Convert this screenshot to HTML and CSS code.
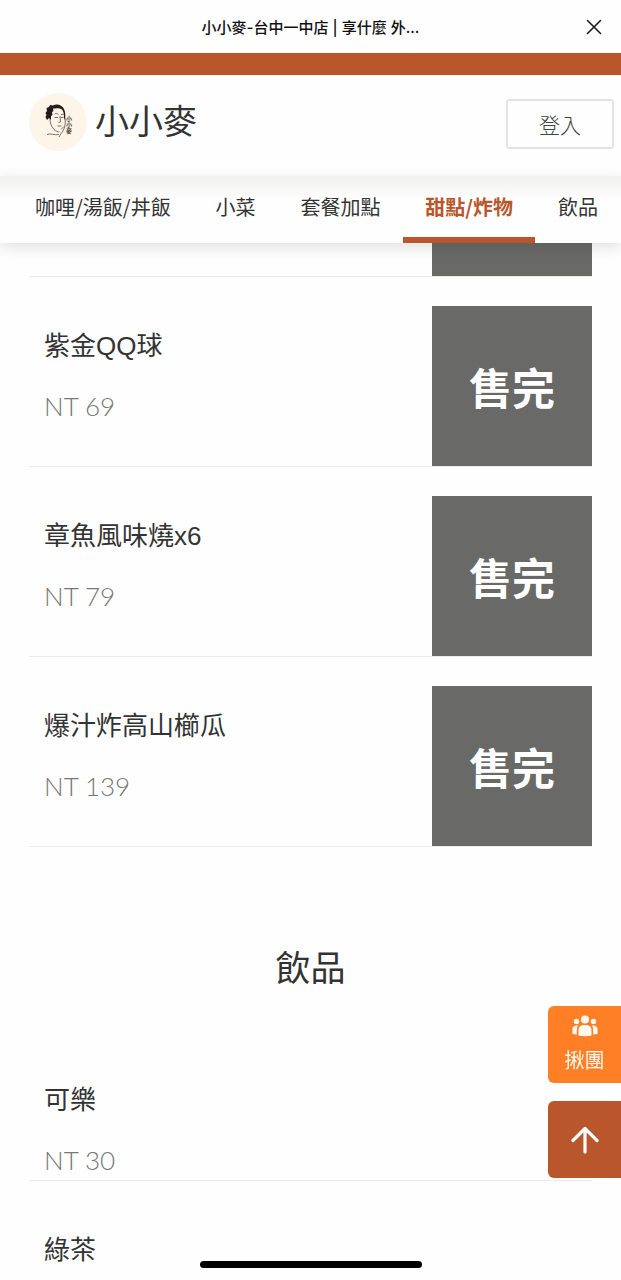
FILE: index.html
```html
<!DOCTYPE html>
<html lang="zh-Hant">
<head>
<meta charset="utf-8">
<meta name="viewport" content="width=device-width, initial-scale=1">
<title>小小麥-台中一中店</title>
<link rel="stylesheet" href="styles.css">
</head>
<body class="app">
  <div class="titlebar">
    <span class="titlebar-text">小小麥-台中一中店 | 享什麼 外...</span>
    <button class="close" type="button" aria-label="關閉">
      <svg width="16" height="16" viewBox="0 0 16 16" fill="none" stroke="#1c1c1c" stroke-width="1.6" stroke-linecap="round"><path d="M1.500 1.500 14.500 14.500M14.500 1.500 1.500 14.500"/></svg>
    </button>
  </div>
  <header class="header">
    <div class="brand">
      <svg class="logo" viewBox="0 0 58 58" aria-hidden="true">
        <circle cx="29" cy="29" r="29" fill="#fcf5e8"/>
        <path d="M18 27 16.500 24 17.500 22 16.500 20 18 18 17.500 15 20 14 21 12 24 12.500C28 10.500 33 12 35 16 36.500 19 36.500 23 36 27L35 25C35 21 34.500 18 33 16.500 30 14.500 27 15.500 24 15.500L24.500 18 23 19 23.500 22 22 23 22 27 20 25Z" fill="#241c18"/>
        <path d="M21 26C21 30 22 33 25 36.500 27 38.500 29 39 30.500 39M36 25C36.500 29 36.500 33 34.500 37 33 40 31 41.500 30 44M18 41.500C22 40 25 42.500 30 41.500M25.500 21C27 20 28.500 20.500 29.500 21.500M32 21.500 34.500 21.500M25.500 24.500 29 24.500M32 24.500 34.500 24.500M31 23 31.500 29 29.500 29.500M28.500 33 32.500 33M32 36.500 35 33.500" fill="none" stroke="#5d5048" stroke-width=".8"/>
        <text class="logo-text" x="40" y="23">小小麥</text>
      </svg>
      <h1 class="brand-name">小小麥</h1>
    </div>
    <button class="login" type="button">登入</button>
  </header>
  <nav class="tabs">
    <a class="tab" href="#curry">咖哩/湯飯/丼飯</a>
    <a class="tab" href="#side">小菜</a>
    <a class="tab" href="#combo">套餐加點</a>
    <a class="tab tab-active" href="#dessert">甜點/炸物</a>
    <a class="tab" href="#drinks">飲品</a>
  </nav>
  <main class="menu">
    <ul class="items" id="dessert">
      <li class="item item-scrolled"><div class="thumb"></div></li>
      <li class="item"><div class="info"><h3 class="name">紫金QQ球</h3><p class="price">NT 69</p></div><div class="thumb">售完</div></li>
      <li class="item"><div class="info"><h3 class="name">章魚風味燒x6</h3><p class="price">NT 79</p></div><div class="thumb">售完</div></li>
      <li class="item"><div class="info"><h3 class="name">爆汁炸高山櫛瓜</h3><p class="price">NT 139</p></div><div class="thumb">售完</div></li>
    </ul>
    <h2 class="section-title">飲品</h2>
    <ul class="items" id="drinks">
      <li class="item"><div class="info"><h3 class="name">可樂</h3><p class="price">NT 30</p></div></li>
      <li class="item"><div class="info"><h3 class="name">綠茶</h3></div></li>
    </ul>
  </main>
  <div class="floating">
    <button class="fab fab-group" type="button">
      <svg width="26" height="22" viewBox="0 0 26 22" fill="#fffaf2" aria-hidden="true">
        <circle cx="13" cy="4.500" r="4"/><circle cx="4.500" cy="6.500" r="2.700"/><circle cx="21.500" cy="6.500" r="2.700"/>
        <path d="M6.500 20.500V15.500C6.500 11.500 9 10 13 10S19.500 11.500 19.500 15.500V20.500Q13 22 6.500 20.500ZM.500 19V14.500C.500 11.500 2 10.500 6 10.500 5 12 4.800 13.500 4.800 19.500ZM25.500 19V14.500C25.500 11.500 24 10.500 20 10.500 21 12 21.200 13.500 21.200 19.500Z"/>
      </svg>
      <span>揪團</span>
    </button>
    <button class="fab fab-top" type="button" aria-label="回到頂端">
      <svg width="28" height="28" viewBox="0 0 28 28" fill="none" stroke="#fff" stroke-width="3.200" stroke-linecap="round" stroke-linejoin="round"><path d="M14 26V2.500M2 14.500 14 2.500 26 14.500"/></svg>
    </button>
  </div>
  <div class="home-indicator"></div>
</body>
</html>
```

FILE: styles.css
```css
* { box-sizing: border-box; margin: 0; padding: 0; }

.app {
  display: flex;
  flex-direction: column;
  height: 100vh;
  overflow: hidden;
  background: #fefefe;
  color: #333;
  font-family: "Noto Sans CJK TC", sans-serif;
}

button { font: inherit; border: 0; background: none; cursor: pointer; }

.titlebar {
  display: grid;
  grid-template-columns: 40px 1fr 40px;
  align-items: center;
  height: 53px;
  padding: 0 7px;
  flex: none;
}
.titlebar-text {
  grid-column: 2;
  padding-top: 3px;
  text-align: center;
  font-family: Inter, "Noto Sans CJK TC", sans-serif;
  font-size: 15px;
  font-weight: 500;
  line-height: 20px;
  color: #111;
}
.close { display: flex; justify-content: center; }

.header {
  display: flex;
  flex: none;
  justify-content: space-between;
  align-items: center;
  height: 123px;
  padding: 0 7px 8px 29px;
  border-top: 22px solid #b9562c;
}
.brand { display: flex; align-items: center; gap: 8px; }
.logo { width: 58px; height: 58px; }
.logo-text {
  font-size: 6px;
  font-weight: 700;
  fill: #4a3c34;
  writing-mode: vertical-rl;
}
.brand-name {
  padding-bottom: 4px;
  font-size: 34px;
  font-weight: 400;
  line-height: 50px;
}
.login {
  width: 108px;
  height: 50px;
  margin-top: 5px;
  border: 2px solid #e4e4e4;
  border-radius: 3px;
  font-size: 21px;
  font-weight: 300;
  color: #444;
}

.tabs {
  position: relative;
  z-index: 1;
  display: flex;
  flex: none;
  justify-content: space-between;
  height: 67px;
  padding: 0 1px 0 13px;
  background: linear-gradient(#f1f1f0, #fefefe 24px);
  box-shadow: 0 4px 14px rgba(0, 0, 0, 0.12);
}
.tab {
  padding: 0 22px;
  font-size: 20px;
  line-height: 62px;
  color: #333;
  text-decoration: none;
  white-space: nowrap;
}
.tab-active {
  border-bottom: 6px solid #b9562c;
  color: #b9562c;
  font-weight: 700;
}

.menu { flex: 1; min-height: 0; overflow: hidden; padding: 0 29px; }
.items { list-style: none; }
.item {
  display: flex;
  justify-content: space-between;
  min-height: 150px;
  box-shadow: 0 1px 0 #ebebeb;
}
.item-scrolled {
  height: 33px;
  min-height: 0;
  justify-content: flex-end;
  align-items: flex-end;
  overflow: hidden;
}
.info { padding: 50px 15px 0; }
.name {
  font-family: "Liberation Sans", "Noto Sans CJK TC", sans-serif;
  font-size: 26px;
  font-weight: 400;
  line-height: 40px;
}
.price {
  margin-top: 20px;
  font: 300 26px/40px Lato, sans-serif;
  color: #777;
}
.thumb {
  display: flex;
  flex: none;
  align-items: center;
  justify-content: center;
  width: 160px;
  height: 160px;
  margin-top: 30px;
  background: #696967;
  color: #fff;
  font-size: 43px;
  font-weight: 700;
  line-height: 60px;
}
.section-title {
  padding: 90px 0 34px;
  text-align: center;
  font-size: 35px;
  font-weight: 400;
  line-height: 60px;
}

.floating {
  position: fixed;
  right: 0;
  bottom: 102px;
  z-index: 2;
  display: grid;
  gap: 18px;
}
.fab {
  display: flex;
  flex-direction: column;
  align-items: center;
  justify-content: center;
  width: 73px;
  height: 77px;
  border-radius: 6px 0 0 6px;
  color: #fffaf2;
  font-size: 20px;
  line-height: 30px;
}
.fab-group { gap: 8px; background: #ff7f27; }
.fab-top { background: #b9562c; }
.home-indicator {
  position: fixed;
  left: 50%;
  bottom: 12px;
  z-index: 3;
  width: 222px;
  height: 7px;
  margin-left: -111px;
  border-radius: 4px;
  background: #000;
}
```
